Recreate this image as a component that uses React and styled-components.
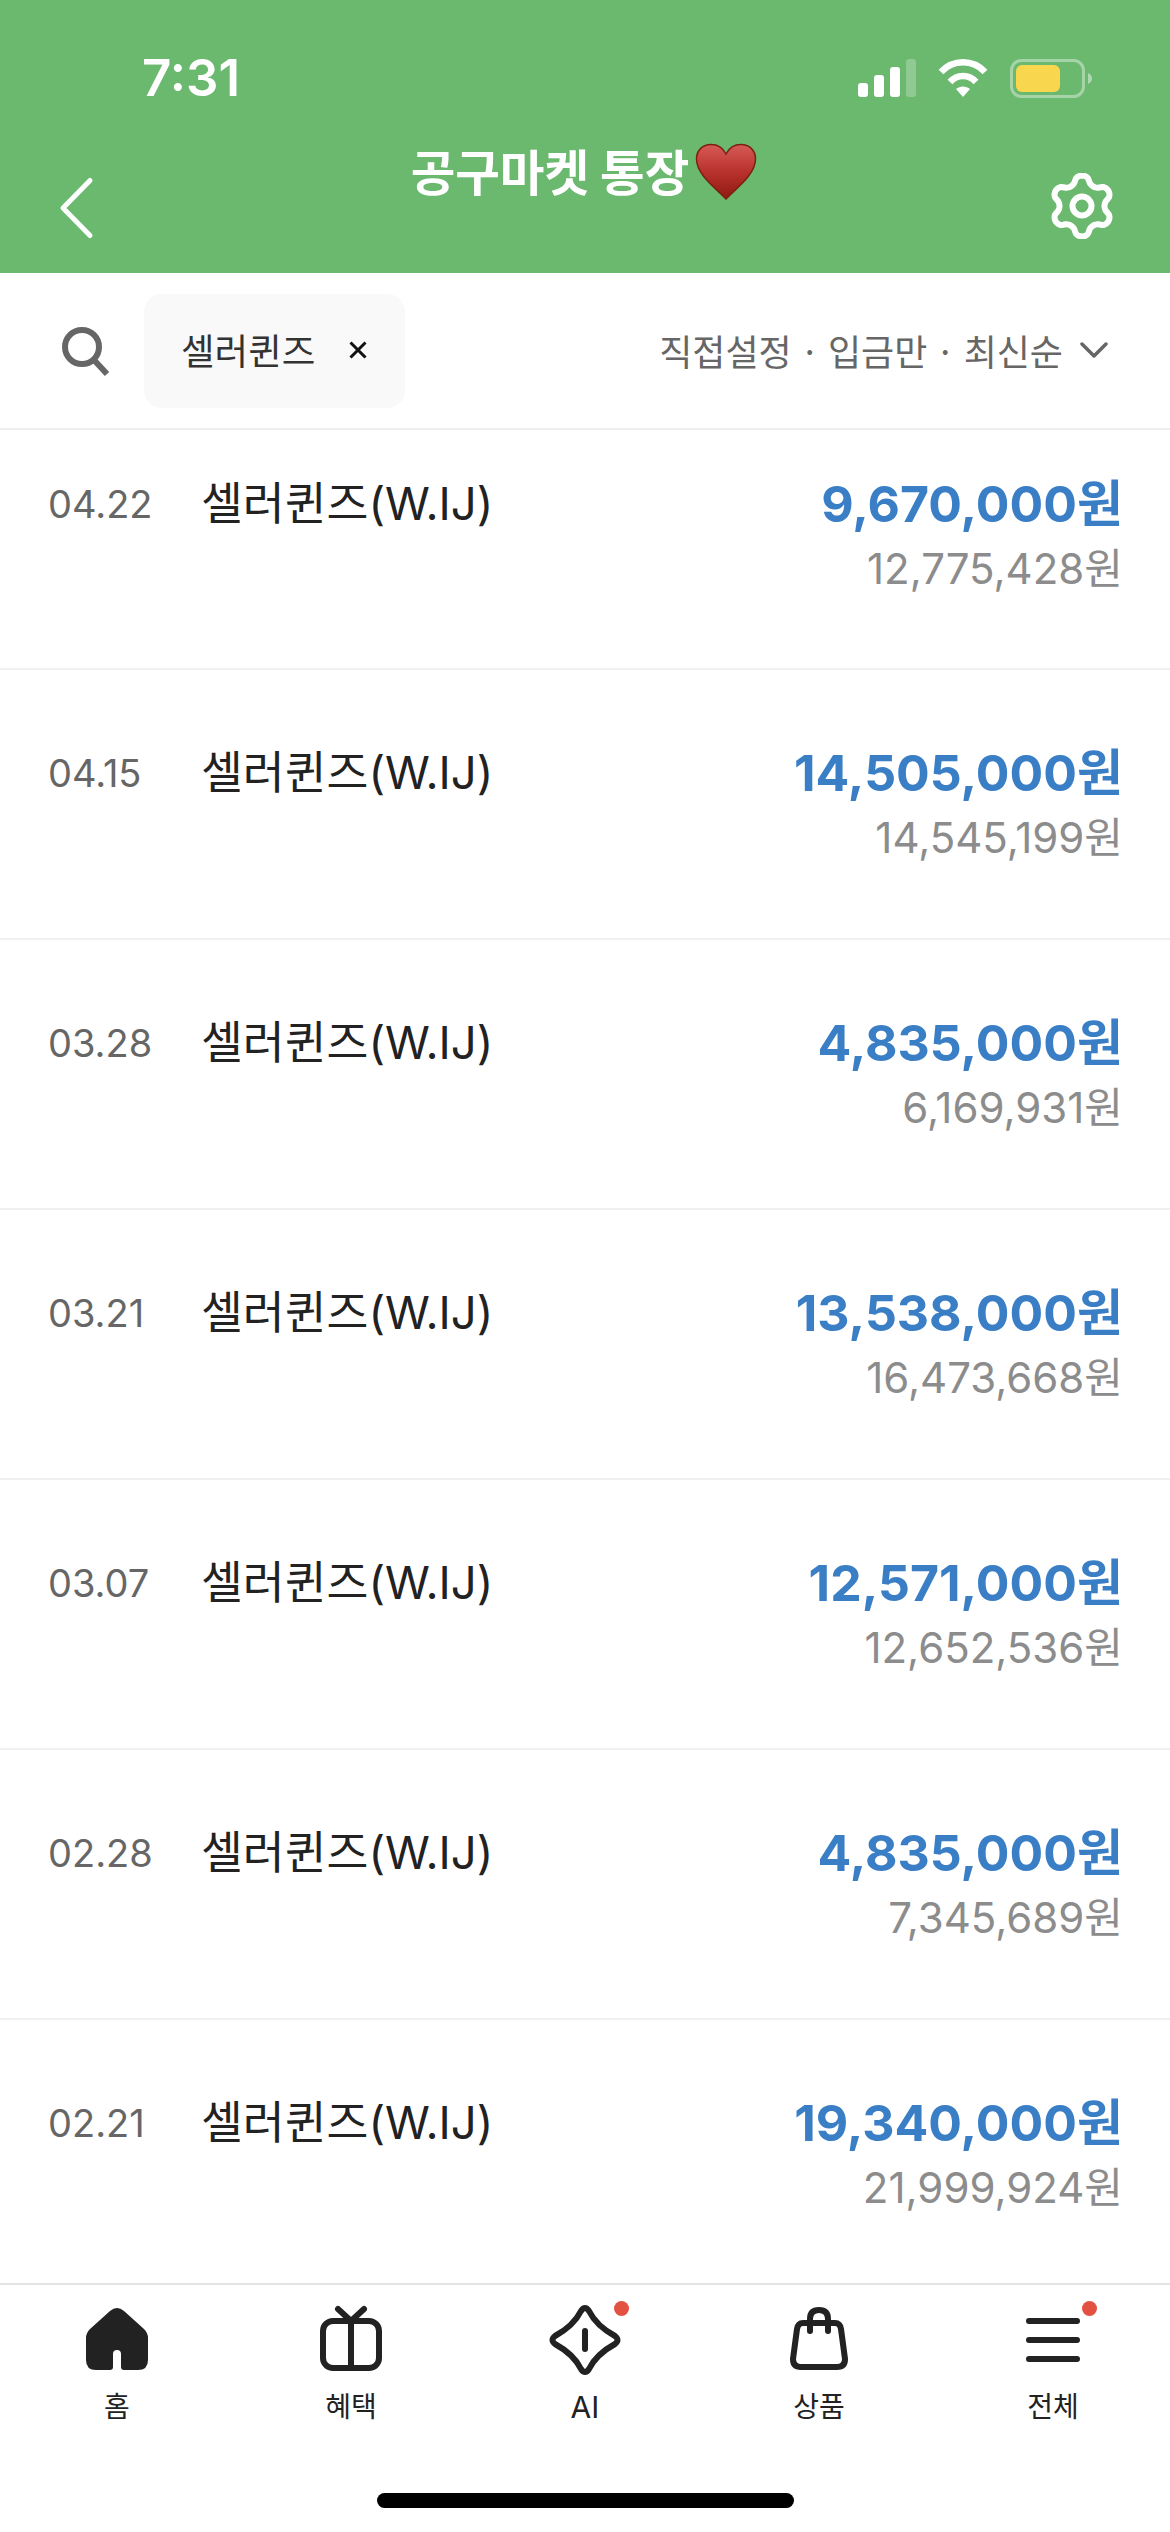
import React from "react";
import styled, { createGlobalStyle } from "styled-components";

const Global = createGlobalStyle`
  html, body { margin: 0; padding: 0; background: #fff; }
  * { box-sizing: border-box; }
  body { font-family: Inter, "Noto Sans CJK KR", sans-serif; }
`;

const Page = styled.div`
  width: 1170px;
  height: 2532px;
  display: flex;
  flex-direction: column;
  overflow: hidden;
  background: #fff;
`;

const Header = styled.header`
  height: 273px;
  flex: none;
  background: #6bb86f;
  display: flex;
  flex-direction: column;
`;

const StatusBar = styled.div`
  height: 97px;
  padding: 59px 78px 0 142px;
  display: flex;
  justify-content: space-between;
  align-items: center;
  flex: none;
`;

const Time = styled.span`
  font-size: 51px;
  font-weight: 600;
  line-height: 40px;
  color: #fff;
`;

const StatusIcons = styled.div`
  display: flex;
  align-items: center;
  gap: 22px;
`;

const NavBar = styled.div`
  flex: 1;
  padding: 0 55px 0 57px;
  display: flex;
  justify-content: space-between;
  align-items: flex-start;
`;

const HeaderIcon = styled.svg`
  flex: none;
  margin-top: ${(p) => p.$top}px;
  display: block;
`;

const Title = styled.h1`
  margin: 38px 0 0 24px;
  display: flex;
  align-items: flex-start;
  gap: 6px;
  font-size: 48.5px;
  font-weight: 700;
  line-height: 70px;
  color: #fff;
  font-family: "Noto Sans CJK KR", sans-serif;
`;

const HeartIcon = styled.svg`
  display: block;
  flex: none;
  margin-top: 8px;
`;

const FilterBar = styled.div`
  height: 157px;
  flex: none;
  padding: 21px 62px 0 62px;
  display: flex;
  align-items: flex-start;
  border-bottom: 2px solid #eeeeee;
`;

const SearchIcon = styled.svg`
  display: block;
  flex: none;
  margin-top: 33px;
`;

const Chip = styled.div`
  margin-left: 34px;
  width: 261px;
  height: 114px;
  border-radius: 18px;
  background: #f9f9f9;
  display: flex;
  align-items: center;
  padding: 0 0 3px 37px;
  gap: 34px;
  font-size: 36.5px;
  color: #333;
  font-family: "Noto Sans CJK KR", sans-serif;
`;

const ChipClose = styled.svg`
  display: block;
  flex: none;
`;

const FilterSummary = styled.div`
  margin-left: auto;
  height: 114px;
  padding-bottom: 3px;
  display: flex;
  align-items: center;
  gap: 17px;
  font-size: 36px;
  color: #666;
  font-family: "Noto Sans CJK KR", sans-serif;
`;

const Chevron = styled.svg`
  display: block;
  flex: none;
`;

const List = styled.ul`
  flex: 1;
  margin: 0;
  padding: 0;
  list-style: none;
  overflow: hidden;
`;

const Row = styled.li`
  height: ${(p) => p.$height}px;
  padding: ${(p) => p.$top}px 47px 0 48px;
  border-bottom: ${(p) => (p.$last ? "none" : "2px solid #f0f0f0")};
  display: flex;
  align-items: flex-start;
`;

const DateText = styled.span`
  width: 153px;
  flex: none;
  font-size: 38px;
  line-height: 64px;
  color: #666;
`;

const Name = styled.span`
  font-size: 45.5px;
  line-height: 64px;
  color: #222;
  font-family: Inter, "Noto Sans CJK KR", sans-serif;
`;

const Amounts = styled.div`
  margin-left: auto;
  display: flex;
  flex-direction: column;
  align-items: flex-end;
`;

const Amount = styled.span`
  font-size: 50px;
  font-weight: 700;
  line-height: 64px;
  color: #3a7fc6;
`;

const Balance = styled.span`
  font-size: 42px;
  line-height: 66px;
  color: #8c8c8c;
`;

const Footer = styled.footer`
  height: 249px;
  flex: none;
  border-top: 2px solid #e4e4e4;
  padding-top: 19px;
  display: flex;
  flex-direction: column;
  align-items: center;
`;

const Tabs = styled.nav`
  width: 100%;
  display: grid;
  grid-template-columns: repeat(5, 1fr);
`;

const Tab = styled.div`
  display: flex;
  flex-direction: column;
  align-items: center;
`;

const IconSlot = styled.div`
  position: relative;
  width: 80px;
  height: 72px;
`;

const TabIcon = styled.svg`
  display: block;
`;

const Badge = styled.span`
  position: absolute;
  top: -3px;
  left: ${(p) => p.$left}px;
  width: 15px;
  height: 15px;
  border-radius: 50%;
  background: #e25141;
`;

const TabLabel = styled.span`
  margin-top: 13px;
  font-size: ${(p) => (p.$latin ? 30 : 28)}px;
  line-height: 36px;
  color: #222;
  font-family: Inter, "Noto Sans CJK KR", sans-serif;
`;

const HomeIndicator = styled.div`
  margin-top: 68px;
  width: 417px;
  height: 15px;
  border-radius: 8px;
  background: #000;
`;

const gearPath = (() => {
  const pts = [];
  const n = 120;
  for (let i = 0; i < n; i++) {
    const t = (i / n) * Math.PI * 2;
    const wave = Math.cos(6 * t);
    const shaped = Math.sign(wave) * Math.pow(Math.abs(wave), 0.6);
    const r = 26.5 + 4 * shaped;
    const x = 33 + r * Math.sin(t);
    const y = 33 - r * Math.cos(t);
    pts.push(`${x.toFixed(2)} ${y.toFixed(2)}`);
  }
  return `M${pts.join("L")}Z`;
})();

const rows = [
  { date: "04.22", amount: "9,670,000원", balance: "12,775,428원" },
  { date: "04.15", amount: "14,505,000원", balance: "14,545,199원" },
  { date: "03.28", amount: "4,835,000원", balance: "6,169,931원" },
  { date: "03.21", amount: "13,538,000원", balance: "16,473,668원" },
  { date: "03.07", amount: "12,571,000원", balance: "12,652,536원" },
  { date: "02.28", amount: "4,835,000원", balance: "7,345,689원" },
  { date: "02.21", amount: "19,340,000원", balance: "21,999,924원" },
];

const Signal = () => (
  <svg width="58" height="38" viewBox="0 0 58 38" style={{ display: "block" }}>
    <rect x="0" y="24" width="10" height="14" rx="3" fill="#fff" />
    <rect x="16" y="16" width="10" height="22" rx="3" fill="#fff" />
    <rect x="32" y="8" width="10" height="30" rx="3" fill="#fff" />
    <rect x="48" y="0" width="10" height="38" rx="3" fill="#fff" fillOpacity="0.25" />
  </svg>
);

const Wifi = () => (
  <svg width="50" height="38" viewBox="0 0 50 38" style={{ display: "block" }}>
    <path d="M3 13C15 0 35 0 47 13" fill="none" stroke="#fff" strokeWidth="6.5" />
    <path d="M12 23C19 15 31 15 38 23" fill="none" stroke="#fff" strokeWidth="6.5" />
    <path d="M18 30C22 26.5 28 26.5 32 30L25 38Z" fill="#fff" />
  </svg>
);

const Battery = () => (
  <svg width="82" height="39" viewBox="0 0 82 39" style={{ display: "block" }}>
    <rect x="1.5" y="1.5" width="72" height="36" rx="10" fill="none" stroke="#fff" strokeOpacity="0.4" strokeWidth="3" />
    <rect x="6" y="6" width="44" height="27" rx="6" fill="#f8d64e" />
    <path d="M78 14C81 15.5 82 17.5 82 19.5C82 21.5 81 23.5 78 25Z" fill="#fff" fillOpacity="0.45" />
  </svg>
);

const Heart = () => (
  <HeartIcon width="62" height="58" viewBox="0 0 62 58">
    <defs>
      <linearGradient id="heart" x1="0" y1="0" x2="0" y2="1">
        <stop offset="0" stopColor="#d65a58" />
        <stop offset="0.5" stopColor="#b9322c" />
        <stop offset="1" stopColor="#8e1a10" />
      </linearGradient>
    </defs>
    <path
      d="M31 56C22 46 1.5 32 1.5 16C1.5 7 8 1.5 16 1.5C23 1.5 28 5 31 11C34 5 39 1.5 46 1.5C54 1.5 60.5 7 60.5 16C60.5 32 40 46 31 56Z"
      fill="url(#heart)"
      stroke="#7c1f14"
      strokeWidth="1.5"
    />
  </HeartIcon>
);

const HomeIcon = () => (
  <TabIcon width="80" height="72" viewBox="0 0 80 72">
    <path
      d="M33 7Q40 1 47 7L67 25Q71 29 71 34V56Q71 66 61 66H47Q44 66 44 63V50Q44 46 40 46Q36 46 36 50V63Q36 66 33 66H19Q9 66 9 56V34Q9 29 13 25Z"
      fill="#222"
    />
  </TabIcon>
);

const GiftIcon = () => (
  <TabIcon width="80" height="72" viewBox="0 0 80 72" fill="none" stroke="#222" strokeWidth="6" strokeLinecap="round" strokeLinejoin="round">
    <rect x="12" y="17" width="56" height="47" rx="10" />
    <path d="M40 17V64" strokeLinecap="butt" />
    <path d="M27 5L40 17L53 5" />
  </TabIcon>
);

const AiIcon = () => (
  <TabIcon width="80" height="72" viewBox="0 0 80 72" fill="none" stroke="#222" strokeWidth="6" strokeLinecap="round" strokeLinejoin="round">
    <path d="M36 7Q40 1 44 7C49 17 59 26 70 32Q75 36 70 40C59 46 49 55 44 65Q40 71 36 65C31 55 21 46 10 40Q5 36 10 32C21 26 31 17 36 7Z" />
    <path d="M40 27V45" />
  </TabIcon>
);

const BagIcon = () => (
  <TabIcon width="80" height="72" viewBox="0 0 80 72" fill="none" stroke="#222" strokeWidth="6" strokeLinecap="round" strokeLinejoin="round">
    <path d="M24 19H56Q61 19 62 25L66 55Q66 63 58 63H22Q14 63 14 55L18 25Q19 19 24 19Z" />
    <path d="M31 27V15Q31 6 40 6Q49 6 49 15V27" />
  </TabIcon>
);

const MenuIcon = () => (
  <TabIcon width="80" height="72" viewBox="0 0 80 72" fill="none" stroke="#222" strokeWidth="6" strokeLinecap="round">
    <path d="M16 17H64M16 36H64M16 55H64" />
  </TabIcon>
);

const tabs = [
  { label: "홈", icon: <HomeIcon /> },
  { label: "혜택", icon: <GiftIcon /> },
  { label: "AI", icon: <AiIcon />, badge: 69, latin: true },
  { label: "상품", icon: <BagIcon /> },
  { label: "전체", icon: <MenuIcon />, badge: 69 },
];

export default function App() {
  return (
    <Page>
      <Global />
      <Header>
        <StatusBar>
          <Time>7:31</Time>
          <StatusIcons>
            <Signal />
            <Wifi />
            <Battery />
          </StatusIcons>
        </StatusBar>
        <NavBar>
          <HeaderIcon $top={79} width="38" height="64" viewBox="0 0 38 64" fill="none" stroke="#fff" strokeWidth="5" strokeLinecap="round" strokeLinejoin="round">
            <path d="M33 4.5L6 32L33 59.5" />
          </HeaderIcon>
          <Title>
            공구마켓 통장
            <Heart />
          </Title>
          <HeaderIcon $top={76} width="66" height="66" viewBox="0 0 66 66" fill="none" stroke="#fff" strokeWidth="6" strokeLinejoin="round">
            <path d={gearPath} />
            <circle cx="33" cy="33" r="9.5" />
          </HeaderIcon>
        </NavBar>
      </Header>
      <FilterBar>
        <SearchIcon width="48" height="50" viewBox="0 0 48 50" fill="none" stroke="#666" strokeWidth="6">
          <circle cx="20" cy="20" r="17" />
          <path d="M32 33L45 47" />
        </SearchIcon>
        <Chip>
          셀러퀸즈
          <ChipClose width="18" height="18" viewBox="0 0 18 18" stroke="#111" strokeWidth="3">
            <path d="M1.5 1.5L16.5 16.5M16.5 1.5L1.5 16.5" />
          </ChipClose>
        </Chip>
        <FilterSummary>
          직접설정 · 입금만 · 최신순
          <Chevron width="28" height="20" viewBox="0 0 28 20" fill="none" stroke="#666" strokeWidth="3.5" strokeLinecap="round" strokeLinejoin="round">
            <path d="M2 4L14 16L26 4" />
          </Chevron>
        </FilterSummary>
      </FilterBar>
      <List>
        {rows.map((r, i) => (
          <Row key={r.date + i} $height={i === 0 ? 240 : i === rows.length - 1 ? 267 : 270} $top={i === 0 ? 42 : 71} $last={i === rows.length - 1}>
            <DateText>{r.date}</DateText>
            <Name>셀러퀸즈(W.IJ)</Name>
            <Amounts>
              <Amount>{r.amount}</Amount>
              <Balance>{r.balance}</Balance>
            </Amounts>
          </Row>
        ))}
      </List>
      <Footer>
        <Tabs>
          {tabs.map((t) => (
            <Tab key={t.label}>
              <IconSlot>
                {t.icon}
                {t.badge ? <Badge $left={t.badge} /> : null}
              </IconSlot>
              <TabLabel $latin={t.latin}>{t.label}</TabLabel>
            </Tab>
          ))}
        </Tabs>
        <HomeIndicator />
      </Footer>
    </Page>
  );
}
